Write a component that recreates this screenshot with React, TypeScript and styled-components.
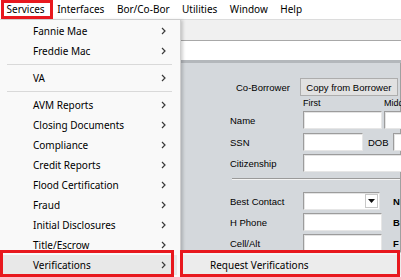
import styled, { createGlobalStyle } from "styled-components";

const GlobalStyle = createGlobalStyle`
  html, body {
    margin: 0;
    padding: 0;
    background: #fff;
  }
  body {
    font-family: "Noto Sans", sans-serif;
  }
`;

const Screen = styled.div`
  position: relative;
  width: 401px;
  height: 277px;
  overflow: hidden;
  background: #d4d8dc;
  display: flex;
  flex-direction: column;
`;

const MenuBar = styled.div`
  height: 19px;
  flex: none;
  display: flex;
  align-items: center;
  padding-left: 0.5px;
  background: #fff;
  border-bottom: 1px solid #dcdcdc;
  font: 10px "Noto Sans", sans-serif;
  color: #000;
`;

const MenuTitle = styled.div`
  padding: 0 6.5px 0 6px;
  line-height: 19px;
  white-space: nowrap;
`;

const ToolBand = styled.div`
  height: 20px;
  flex: none;
  background: #f0f0f0;
  border-bottom: 1px solid #a8a8a8;
`;

const AddressStrip = styled.div`
  height: 19px;
  flex: none;
  background: #fff;
  border-bottom: 3px solid #b3b7bb;
`;

const Panel = styled.div`
  flex: 1;
  display: flex;
  flex-direction: column;
  padding-left: 230px;
  border-right: 1px solid #a0a0a0;
  font: 9.5px "Liberation Sans", Arial, sans-serif;
  color: #000;
`;

const Row = styled.div<{ $top: number; $height?: number }>`
  display: flex;
  align-items: center;
  height: ${(p) => p.$height ?? 18}px;
  margin-top: ${(p) => p.$top}px;
  white-space: nowrap;
`;

const Label = styled.span<{ $width?: number; $indent?: number }>`
  flex: none;
  width: ${(p) => (p.$width ? `${p.$width}px` : "auto")};
  margin-left: ${(p) => p.$indent ?? 0}px;
`;

const Caption = styled.span<{ $width?: number }>`
  flex: none;
  width: ${(p) => (p.$width ? `${p.$width}px` : "auto")};
  font-size: 9px;
`;

const Button = styled.div`
  flex: none;
  margin-left: 10px;
  width: 98px;
  height: 18px;
  box-sizing: border-box;
  display: flex;
  align-items: center;
  justify-content: center;
  background: #e1e1e1;
  border: 1px solid #adadad;
`;

const Input = styled.div<{ $width: number; $gap?: number }>`
  flex: none;
  width: ${(p) => p.$width}px;
  height: 18px;
  margin-left: ${(p) => p.$gap ?? 0}px;
  box-sizing: border-box;
  background: #fff;
  border: 1px solid;
  border-color: #9c9c9c #e6e6e6 #e6e6e6 #9c9c9c;
  box-shadow: inset 1px 1px 0 #e4e4e4;
`;

const Combo = styled(Input)`
  display: flex;
  justify-content: flex-end;
  padding: 1px;
`;

const ComboButton = styled.div`
  width: 13px;
  box-sizing: border-box;
  border: 1px solid #c8c8c8;
  display: flex;
  align-items: center;
  justify-content: center;
`;

const SideLabel = styled.span<{ $gap: number }>`
  margin-left: ${(p) => p.$gap}px;
  font-weight: bold;
`;

const Rule = styled.div`
  margin: 6px 0 0 2px;
  height: 0;
  border-top: 1px solid #9a9a9a;
  border-bottom: 1px solid #f4f4f4;
`;

const Dropdown = styled.div`
  position: absolute;
  left: 0;
  top: 20px;
  bottom: 0;
  width: 181px;
  box-sizing: border-box;
  padding-top: 1px;
  background: #f9f9f9;
  border-right: 1px solid #cfcfcf;
  box-shadow: 2px 0 3px rgba(0, 0, 0, 0.18);
  font: 10px "Noto Sans", sans-serif;
  color: #000;
`;

const Item = styled.div<{ $active?: boolean }>`
  height: 20px;
  display: flex;
  align-items: center;
  justify-content: space-between;
  padding: 0 14px 0 33px;
  margin: 0 ${(p) => (p.$active ? 3 : 0)}px;
  background: ${(p) => (p.$active ? "#e8e8e8" : "transparent")};
  ${(p) => (p.$active ? "padding-left: 30px; padding-right: 11px;" : "")}
`;

const Separator = styled.div`
  height: 1px;
  margin: 3px 8px 3px 7px;
  background: #d9d9d9;
`;

const Submenu = styled.div`
  position: absolute;
  left: 182px;
  top: 252px;
  width: 230px;
  height: 30px;
  box-sizing: border-box;
  padding-top: 2px;
  background: #f4f4f4;
  border: 1px solid #cfcfcf;
  font: 10px "Noto Sans", sans-serif;
  color: #000;
`;

const SubItem = styled.div`
  height: 20px;
  display: flex;
  align-items: center;
  padding-left: 27px;
  background: #ececec;
`;

const Callout = styled.div<{ $x: number; $y: number; $w: number; $h: number }>`
  position: absolute;
  left: ${(p) => p.$x}px;
  top: ${(p) => p.$y}px;
  width: ${(p) => p.$w}px;
  height: ${(p) => p.$h}px;
  box-sizing: border-box;
  border: 3px solid #e8181e;
`;

function Chevron() {
  return (
    <svg width="5" height="8" viewBox="0 0 5 8">
      <path d="M1 1 L4 4 L1 7" fill="none" stroke="#3a3a3a" strokeWidth="1.2" />
    </svg>
  );
}

function DownArrow() {
  return (
    <svg width="7" height="4" viewBox="0 0 7 4">
      <path d="M0 0 H7 L3.5 4 Z" fill="#111" />
    </svg>
  );
}

const topMenus = ["Services", "Interfaces", "Bor/Co-Bor", "Utilities", "Window", "Help"];

const groups = [
  ["Fannie Mae", "Freddie Mac"],
  ["VA"],
  [
    "AVM Reports",
    "Closing Documents",
    "Compliance",
    "Credit Reports",
    "Flood Certification",
    "Fraud",
    "Initial Disclosures",
    "Title/Escrow",
    "Verifications",
  ],
];

export default function App() {
  return (
    <>
      <GlobalStyle />
      <Screen>
        <MenuBar>
          {topMenus.map((m) => (
            <MenuTitle key={m}>{m}</MenuTitle>
          ))}
        </MenuBar>
        <ToolBand />
        <AddressStrip />
        <Panel>
          <Row $top={15}>
            <Label $indent={6}>Co-Borrower</Label>
            <Button>Copy from Borrower</Button>
          </Row>
          <Row $top={0} $height={14}>
            <Caption $width={73} />
            <Caption $width={81}>First</Caption>
            <Caption>Middle</Caption>
          </Row>
          <Row $top={1}>
            <Label $width={73}>Name</Label>
            <Input $width={79} />
            <Input $width={40} $gap={2} />
          </Row>
          <Row $top={4}>
            <Label $width={73}>SSN</Label>
            <Input $width={60} />
            <Label $indent={5}>DOB</Label>
            <Input $width={40} $gap={4} />
          </Row>
          <Row $top={3}>
            <Label $width={73}>Citizenship</Label>
            <Input $width={110} />
          </Row>
          <Rule />
          <Row $top={12}>
            <Label $width={73}>Best Contact</Label>
            <Combo $width={77}>
              <ComboButton>
                <DownArrow />
              </ComboButton>
            </Combo>
            <SideLabel $gap={13}>N</SideLabel>
          </Row>
          <Row $top={3}>
            <Label $width={73}>H Phone</Label>
            <Input $width={79} />
            <SideLabel $gap={11}>B</SideLabel>
          </Row>
          <Row $top={3}>
            <Label $width={73}>Cell/Alt</Label>
            <Input $width={79} />
            <SideLabel $gap={11}>F</SideLabel>
          </Row>
        </Panel>

        <Dropdown>
          {groups.map((g, gi) => (
            <div key={gi}>
              {gi > 0 && <Separator />}
              {g.map((name) => (
                <Item key={name} $active={name === "Verifications"}>
                  <span>{name}</span>
                  <Chevron />
                </Item>
              ))}
            </div>
          ))}
        </Dropdown>
        <Submenu>
          <SubItem>Request Verifications</SubItem>
        </Submenu>

        <Callout $x={1} $y={0} $w={52} $h={19} />
        <Callout $x={0} $y={250} $w={174} $h={27} />
        <Callout $x={180} $y={250} $w={220} $h={27} />
      </Screen>
    </>
  );
}
